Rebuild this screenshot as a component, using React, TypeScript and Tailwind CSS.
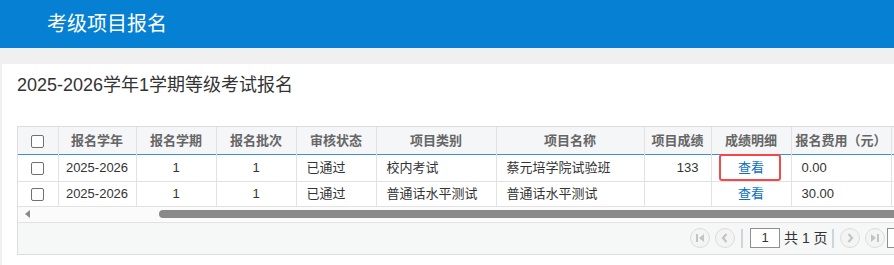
import React from 'react';

const COLS = [40, 78, 80, 80, 80, 120, 148, 67, 80, 100, 100];

const HEAD = ['报名学年', '报名学期', '报名批次', '审核状态', '项目类别', '项目名称', '项目成绩', '成绩明细', '报名费用（元）', ''];

const ROWS = [
  { year: '2025-2026', term: '1', batch: '1', status: '已通过', type: '校内考试', name: '蔡元培学院试验班', score: '133', fee: '0.00', mark: true },
  { year: '2025-2026', term: '1', batch: '1', status: '已通过', type: '普通话水平测试', name: '普通话水平测试', score: '', fee: '30.00', mark: false },
];

const Box = () => (
  <span className="inline-block w-[13px] h-[13px] border border-[#707070] rounded-[2px] bg-white align-middle" />
);

const PageBtn = ({ kind }: { kind: 'first' | 'prev' | 'next' | 'last' }) => (
  <span className="w-[20px] h-[20px] rounded-full border border-[#dcdcdc] bg-[#f4f4f4] flex items-center justify-center">
    <svg width="12" height="12" viewBox="0 0 12 12">
      {kind === 'first' && (
        <g fill="#c4c4c4">
          <rect x="2" y="2" width="2" height="8" />
          <path d="M10 2 L5 6 L10 10 Z" />
        </g>
      )}
      {kind === 'last' && (
        <g fill="#c4c4c4">
          <rect x="8" y="2" width="2" height="8" />
          <path d="M2 2 L7 6 L2 10 Z" />
        </g>
      )}
      {kind === 'prev' && <path d="M7.5 2 L4 6 L7.5 10" stroke="#c4c4c4" strokeWidth="2.2" fill="none" />}
      {kind === 'next' && <path d="M4.5 2 L8 6 L4.5 10" stroke="#c4c4c4" strokeWidth="2.2" fill="none" />}
    </svg>
  </span>
);

export default function App() {
  const font = { fontFamily: '"Liberation Sans", Arial, "Noto Sans CJK SC", sans-serif' };
  return (
    <div className="w-[894px] h-[265px] overflow-hidden bg-[#f0f0f0]" style={font}>
      <div className="h-[48px] bg-[#0580d3] flex items-center pl-[47px]">
        <span className="text-white text-[20px]">考级项目报名</span>
      </div>
      <div className="mt-[16px] ml-[2px] bg-white h-[201px] pl-[15px] pt-[9px]">
        <div className="text-[18px] text-[#333] leading-[24px] h-[53px]">2025-2026学年1学期等级考试报名</div>
        <div className="w-[1000px] border border-[#dddddd]">
          <table className="table-fixed border-collapse text-[13px]">
            <colgroup>
              {COLS.map((w, i) => (
                <col key={i} style={{ width: w }} />
              ))}
            </colgroup>
            <thead>
              <tr className="h-[27px] bg-[#f5f6f7] border-b border-[#3b8fd6]">
                <th className="border-r border-[#e2e2e2] align-bottom pb-[3px]">
                  <Box />
                </th>
                {HEAD.map((h, i) => (
                  <th key={i} className="border-r border-[#e2e2e2] font-bold text-[#666] text-center whitespace-nowrap">
                    {h}
                  </th>
                ))}
              </tr>
            </thead>
            <tbody className="text-[#333]">
              {ROWS.map((r, i) => (
                <tr key={i} className={`${i === 0 ? 'h-[27px]' : 'h-[25px]'} border-b border-[#e2e2e2]`}>
                  <td className="border-r border-[#e2e2e2] text-center">
                    <Box />
                  </td>
                  <td className="border-r border-[#e2e2e2] text-center">{r.year}</td>
                  <td className="border-r border-[#e2e2e2] text-center">{r.term}</td>
                  <td className="border-r border-[#e2e2e2] text-center">{r.batch}</td>
                  <td className="border-r border-[#e2e2e2] pl-[10px]">{r.status}</td>
                  <td className="border-r border-[#e2e2e2] pl-[10px] whitespace-nowrap">{r.type}</td>
                  <td className="border-r border-[#e2e2e2] pl-[10px] whitespace-nowrap">{r.name}</td>
                  <td className="border-r border-[#e2e2e2] text-right pr-[12px]">{r.score}</td>
                  <td className="border-r border-[#e2e2e2] text-center">
                    <span className="relative inline-block text-[#0b6fc2]">
                      查看
                      {r.mark && (
                        <span className="absolute left-[-19px] right-[-17px] top-[-4px] bottom-[-4px] border-2 border-[#f04a4a] rounded-[3px]" />
                      )}
                    </span>
                  </td>
                  <td className="border-r border-[#e2e2e2] pl-[10px]">{r.fee}</td>
                  <td className="border-r border-[#e2e2e2]"></td>
                </tr>
              ))}
            </tbody>
          </table>
          <div className="h-[16px] bg-[#fcfbfc] border-b border-[#e2e2e2] flex items-center">
            <svg width="20" height="16" viewBox="0 0 20 16" className="shrink-0">
              <path d="M7 8 L12 4 L12 12 Z" fill="#8a8a8a" />
            </svg>
            <div className="ml-[121px] h-[8px] flex-1 bg-[#8a8a8a] rounded-l-full" />
          </div>
          <div className="h-[31px] bg-[#f6f8f7] flex items-center">
            <div className="ml-[672px] flex items-center">
              <PageBtn kind="first" />
              <span className="ml-[5px]"><PageBtn kind="prev" /></span>
              <span className="ml-[6px] w-[2px] h-[19px] bg-[#ccd6dc]" />
              <span className="ml-[7px] w-[30px] h-[20px] bg-white border border-[#8f8f8f] text-[13px] text-[#333] flex items-center justify-center">
                1
              </span>
              <span className="ml-[4px] text-[14px] text-[#333] whitespace-nowrap">共 1 页</span>
              <span className="ml-[4px] w-[2px] h-[19px] bg-[#ccd6dc]" />
              <span className="ml-[6px]"><PageBtn kind="next" /></span>
              <span className="ml-[5px]"><PageBtn kind="last" /></span>
              <span className="ml-[2px] w-[30px] h-[20px] bg-white border border-[#8f8f8f]" />
            </div>
          </div>
        </div>
      </div>
    </div>
  );
}
